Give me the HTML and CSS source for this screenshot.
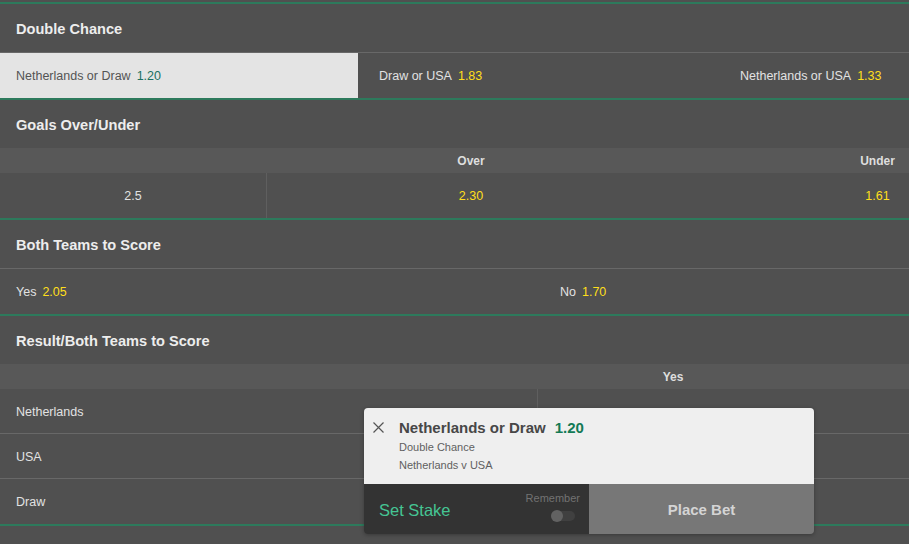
FILE: index.html
```html
<!DOCTYPE html>
<html lang="en">
<head>
<meta charset="utf-8">
<title>Markets</title>
<link rel="stylesheet" href="styles.css">
</head>
<body>
<div class="page">
  <section class="market">
    <div class="market-head">Double Chance</div>
    <div class="row dc">
      <div class="cell sel"><span class="lbl">Netherlands or Draw</span><span class="odds">1.20</span></div>
      <div class="cell mid"><span class="lbl">Draw or USA</span><span class="odds">1.83</span></div>
      <div class="cell last"><span class="lbl">Netherlands or USA</span><span class="odds">1.33</span></div>
    </div>
  </section>

  <section class="market">
    <div class="market-head">Goals Over/Under</div>
    <div class="subhead ou">
      <div></div>
      <div class="c">Over</div>
      <div class="c">Under</div>
    </div>
    <div class="row ou flat">
      <div class="cell c divr">2.5</div>
      <div class="cell c"><span class="odds">2.30</span></div>
      <div class="cell c"><span class="odds">1.61</span></div>
    </div>
  </section>

  <section class="market">
    <div class="market-head">Both Teams to Score</div>
    <div class="row bt">
      <div class="cell pad"><span class="lbl">Yes</span><span class="odds">2.05</span></div>
      <div class="cell pad"><span class="lbl">No</span><span class="odds">1.70</span></div>
    </div>
  </section>

  <section class="market">
    <div class="market-head">Result/Both Teams to Score</div>
    <div class="subhead rb">
      <div></div>
      <div class="c">Yes</div>
      <div></div>
    </div>
    <div class="row rb flat line">
      <div class="cell pad divr">Netherlands</div>
      <div class="cell"></div>
      <div class="cell"></div>
    </div>
    <div class="row rb flat line">
      <div class="cell pad divr">USA</div>
      <div class="cell"></div>
      <div class="cell"></div>
    </div>
    <div class="row rb flat">
      <div class="cell pad divr">Draw</div>
      <div class="cell"></div>
      <div class="cell"></div>
    </div>
  </section>
</div>

<div class="slip">
  <div class="slip-top">
    <svg class="close" width="11" height="11" viewBox="0 0 11 11"><path d="M0.5 0.5 L10.5 10.5 M10.5 0.5 L0.5 10.5" stroke="#555" stroke-width="1.2" fill="none"/></svg>
    <div class="slip-info">
      <div class="slip-title">Netherlands or Draw<span class="slip-odds">1.20</span></div>
      <div class="slip-sub">Double Chance</div>
      <div class="slip-sub">Netherlands v USA</div>
    </div>
  </div>
  <div class="slip-bottom">
    <div class="stake">
      <span class="stake-lbl">Set Stake</span>
      <div class="remember">
        <span>Remember</span>
        <span class="toggle"><span class="knob"></span></span>
      </div>
    </div>
    <div class="place">Place Bet</div>
  </div>
</div>
</body>
</html>
```

FILE: styles.css
```css
html, body {
  margin: 0;
  padding: 0;
  overflow: hidden;
  background: #505050;
}
body {
  width: 909px;
  height: 544px;
  font-family: "Liberation Sans", Arial, sans-serif;
  font-size: 12.5px;
  color: #e2e2e2;
  position: relative;
}
.page {
  width: 1080px;
  padding-top: 2px;
}
.market {
  border-top: 2px solid #2d7a5c;
}
.market:last-child {
  border-bottom: 2px solid #2d7a5c;
}
.market-head {
  height: 48px;
  box-sizing: border-box;
  display: flex;
  align-items: center;
  padding: 2px 0 0 16px;
  font-size: 14.6px;
  font-weight: bold;
  color: #ededed;
}
.row {
  display: grid;
  height: 45px;
  border-top: 1px solid #686868;
  box-sizing: content-box;
}
.row.flat {
  border-top: none;
}
.row.line {
  height: 44px;
  border-bottom: 1px solid #686868;
}
.cell {
  display: flex;
  align-items: center;
  white-space: nowrap;
  padding-top: 1px;
}
.cell.c {
  justify-content: center;
}
.cell.pad {
  padding-left: 16px;
}
.divr {
  border-right: 1px solid #5f5f5f;
}
.lbl {
  margin-right: 6px;
}
.odds {
  color: #ffdf1b;
}
.dc {
  grid-template-columns: 358px 358px 1fr;
}
.dc .sel {
  background: #e4e4e4;
  color: #545454;
  padding-left: 16px;
}
.dc .sel .odds {
  color: #1a7061;
}
.dc .mid {
  padding-left: 21px;
}
.dc .last {
  padding-left: 24px;
}
.subhead {
  display: grid;
  height: 25px;
  background: #585858;
  font-size: 12px;
  font-weight: bold;
  color: #dedede;
  align-items: center;
}
.subhead .c {
  text-align: center;
}
.ou {
  grid-template-columns: 267px 408px 1fr;
}
.bt {
  grid-template-columns: 544px 1fr;
}
.rb {
  grid-template-columns: 538px 270px 1fr;
}

/* bet slip overlay */
.slip {
  position: absolute;
  left: 364px;
  top: 408px;
  width: 450px;
  height: 126px;
  border-radius: 4px;
  overflow: hidden;
  display: flex;
  flex-direction: column;
  box-shadow: 0 1px 4px rgba(0,0,0,0.3);
}
.slip-top {
  height: 76px;
  background: #efefef;
  display: flex;
  align-items: flex-start;
  box-sizing: border-box;
  padding: 12px 0 0 9px;
}
.close {
  margin-top: 2px;
  margin-right: 15px;
}
.slip-title {
  font-size: 15px;
  font-weight: bold;
  color: #474747;
  line-height: 16px;
}
.slip-odds {
  color: #137a55;
  margin-left: 9px;
}
.slip-sub {
  font-size: 11px;
  color: #5f5f5f;
  line-height: 18px;
}
.slip-title + .slip-sub {
  margin-top: 2px;
}
.slip-bottom {
  height: 50px;
  display: flex;
}
.stake {
  width: 225px;
  background: #333333;
  display: flex;
  align-items: center;
  justify-content: space-between;
  box-sizing: border-box;
  padding: 0 9px 0 15px;
}
.stake-lbl {
  font-size: 16.5px;
  color: #45c593;
  margin-top: 2px;
}
.remember {
  display: flex;
  flex-direction: column;
  align-items: flex-end;
  font-size: 11px;
  color: #727272;
  margin-top: -6px;
}
.toggle {
  width: 24px;
  height: 10px;
  border-radius: 5px;
  background: #404040;
  margin-top: 7px;
  margin-right: 5px;
  position: relative;
}
.knob {
  position: absolute;
  left: 0;
  top: -1px;
  width: 12px;
  height: 12px;
  border-radius: 50%;
  background: #626262;
}
.place {
  flex: 1;
  background: #777777;
  color: #d4d4d4;
  font-size: 15px;
  font-weight: bold;
  display: flex;
  align-items: center;
  justify-content: center;
}
```
